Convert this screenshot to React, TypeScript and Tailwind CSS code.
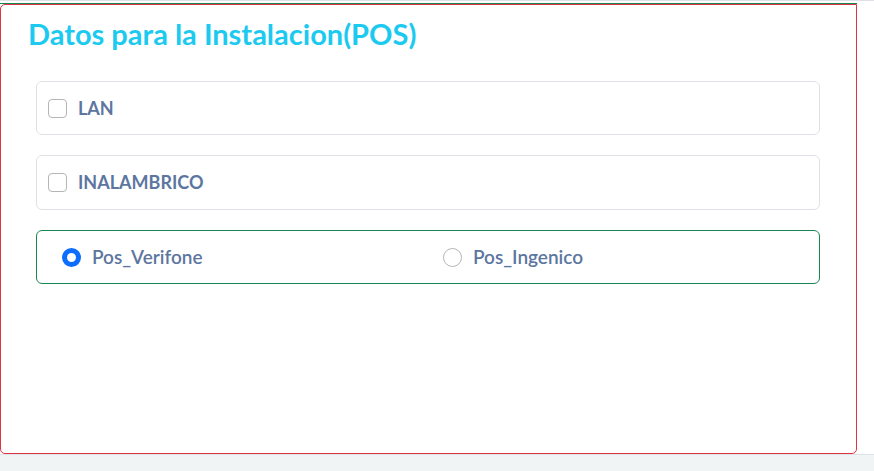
const App = () => {
  return (
    <div className="min-h-[471px] bg-[#f0f4f4] font-['Lato',sans-serif]">
      <div className="h-[455px] bg-white border-t border-b border-[#dee2e6] pt-[2px]">
        <div className="w-[857px] border-t border-[#198754]">
          <div className="h-[450px] bg-white border border-[#dc3545] rounded-[5px] rounded-tr-none">
            <h2 className="pl-[27px] pt-[11px] text-[29px] leading-[35px] font-bold text-[#1ccaf0]">
              Datos para la Instalacion(POS)
            </h2>

            <div className="mt-[30px] pl-[35px] pr-[36px] flex flex-col gap-[20px]">
              <label className="h-[54px] flex items-center border border-[#dee2e6] rounded-[6px] pl-[11px]">
                <span className="w-[19px] h-[19px] border border-[#b5b5b5] rounded-[4px]"></span>
                <span className="ml-[11px] text-[18px] font-bold text-[#5c76a0]">LAN</span>
              </label>

              <label className="h-[55px] flex items-center border border-[#dee2e6] rounded-[6px] pl-[11px]">
                <span className="w-[19px] h-[19px] border border-[#b5b5b5] rounded-[4px]"></span>
                <span className="ml-[11px] text-[18px] font-bold text-[#5c76a0]">INALAMBRICO</span>
              </label>

              <div className="h-[54px] flex items-center border border-[#198754] rounded-[6px] pl-[25px]">
                <label className="w-[381px] flex items-center">
                  <span className="w-[19px] h-[19px] rounded-full border-[5px] border-[#0d6efd] bg-white"></span>
                  <span className="ml-[11px] text-[19px] font-semibold text-[#5c76a0]">Pos_Verifone</span>
                </label>
                <label className="flex items-center">
                  <span className="w-[19px] h-[19px] rounded-full border border-[#b5b5b5]"></span>
                  <span className="ml-[11px] text-[19px] font-semibold text-[#5c76a0]">Pos_Ingenico</span>
                </label>
              </div>
            </div>
          </div>
        </div>
      </div>
    </div>
  );
};

export default App;
